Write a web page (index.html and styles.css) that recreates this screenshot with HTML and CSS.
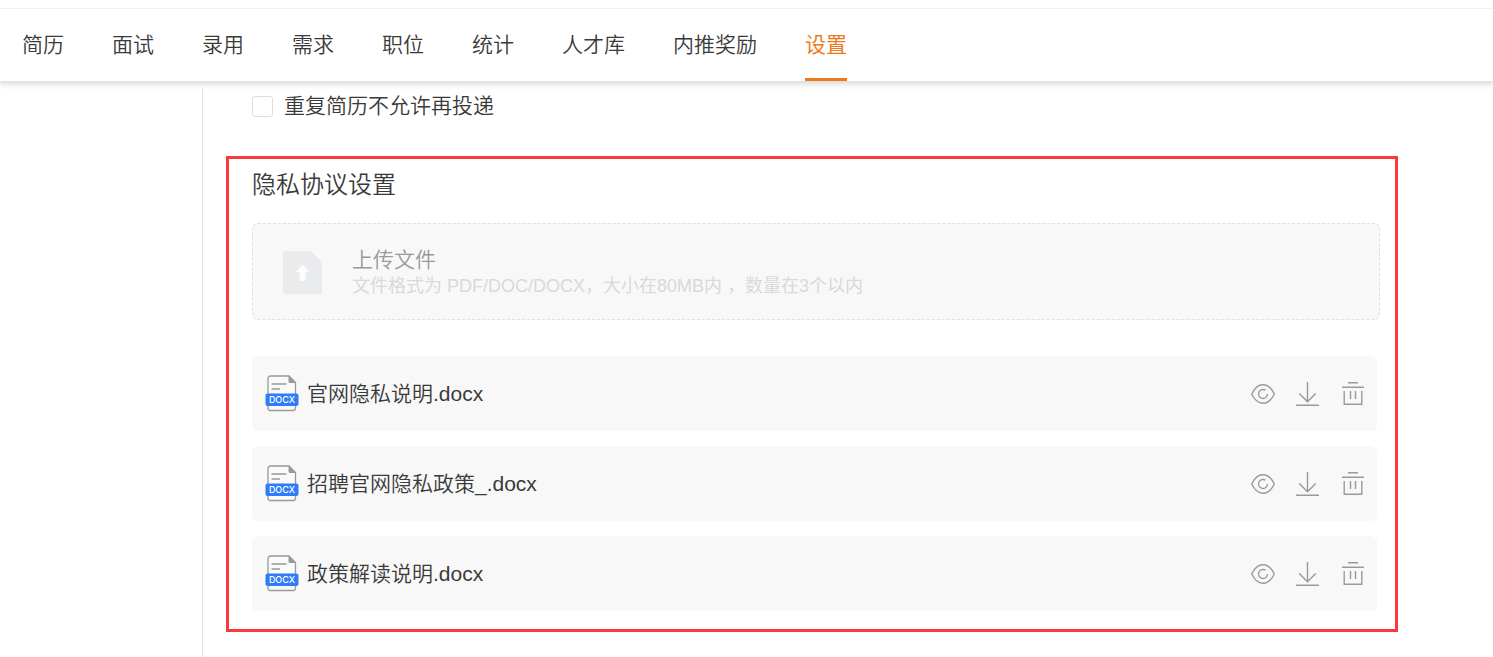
FILE: index.html
```html
<!DOCTYPE html>
<html lang="zh-CN">
<head>
<meta charset="utf-8">
<meta name="viewport" content="width=device-width, initial-scale=1">
<title>设置</title>
<link rel="stylesheet" href="styles.css">
</head>
<body>
<svg class="sprite" aria-hidden="true">
  <symbol id="docx" viewBox="0 0 34 37">
    <path d="M5.500 1h18.500l6.500 6.500v25.500a2.500 2.500 0 0 1-2.500 2.500h-22.500a2.500 2.500 0 0 1-2.500-2.500v-29.500a2.500 2.500 0 0 1 2.500-2.500z" fill="#fafafa" stroke="#999" stroke-width="1.300"/>
    <path d="M23.500 1h.5l6.500 6.500v.5h-5.500a1.500 1.500 0 0 1-1.500-1.500z" fill="#999"/>
    <path d="M7 9h14M7 14h7.500" stroke="#999" stroke-width="1.300" stroke-linecap="round"/>
    <rect x="0.500" y="18.500" width="33" height="12.500" rx="2" fill="#2f7cf6"/>
  </symbol>
  <symbol id="eye" viewBox="0 0 24 24">
    <path d="M.7 12C3.500 6 7.500 2.800 12 2.800S20.500 6 23.300 12C20.500 18 16.500 21.200 12 21.200S3.500 18 .7 12z"/>
    <path d="M14.500 8.200A4.500 4.500 0 1 0 16.500 12"/>
  </symbol>
  <symbol id="download" viewBox="0 0 24 24">
    <path d="M11.500 0v19.500M3.300 11.500l8.200 8.200 8.200-8.200M0 23.300h23"/>
  </symbol>
  <symbol id="trash" viewBox="0 0 24 24">
    <path d="M7 .8h10M1 5.200h22M3.200 9v13.200h17.600V9M9.500 9v8M14.500 9v8"/>
  </symbol>
</svg>

<header class="topbar">
  <nav class="nav" aria-label="主导航">
    <a href="#">简历</a>
    <a href="#">面试</a>
    <a href="#">录用</a>
    <a href="#">需求</a>
    <a href="#">职位</a>
    <a href="#">统计</a>
    <a href="#">人才库</a>
    <a href="#">内推奖励</a>
    <a href="#" class="active" aria-current="page">设置</a>
  </nav>
</header>

<div class="layout">
  <aside class="sidebar"></aside>
  <main class="content">
    <label class="option"><input type="checkbox"><span>重复简历不允许再投递</span></label>

    <section class="privacy">
      <h2 class="title">隐私协议设置</h2>
      <button class="upload" type="button" disabled>
        <svg class="upload-icon" viewBox="0 0 39 43" aria-hidden="true">
          <path d="M2 0h26l11 11v30a2 2 0 0 1-2 2h-35a2 2 0 0 1-2-2v-39a2 2 0 0 1 2-2z" fill="#eaebed"/>
          <path d="M19.500 14l6 6.500h-3.500v9h-5v-9h-3.500z" fill="#fcfcfc" stroke="#fcfcfc" stroke-linejoin="round"/>
        </svg>
        <span class="upload-text">
          <span class="upload-name">上传文件</span>
          <span class="upload-hint">文件格式为 PDF/DOC/DOCX，大小在80MB内 ，数量在3个以内</span>
        </span>
      </button>

      <ul class="files">
        <li class="file">
          <svg class="file-icon" viewBox="0 0 34 37" aria-hidden="true"><use href="#docx"/><text x="17" y="28" text-anchor="middle" class="docx-tag">DOCX</text></svg>
          <span class="file-name">官网隐私说明.docx</span>
          <span class="actions">
            <button type="button" aria-label="预览"><svg><use href="#eye"/></svg></button>
            <button type="button" aria-label="下载"><svg><use href="#download"/></svg></button>
            <button type="button" aria-label="删除"><svg><use href="#trash"/></svg></button>
          </span>
        </li>
        <li class="file">
          <svg class="file-icon" viewBox="0 0 34 37" aria-hidden="true"><use href="#docx"/><text x="17" y="28" text-anchor="middle" class="docx-tag">DOCX</text></svg>
          <span class="file-name">招聘官网隐私政策_.docx</span>
          <span class="actions">
            <button type="button" aria-label="预览"><svg><use href="#eye"/></svg></button>
            <button type="button" aria-label="下载"><svg><use href="#download"/></svg></button>
            <button type="button" aria-label="删除"><svg><use href="#trash"/></svg></button>
          </span>
        </li>
        <li class="file">
          <svg class="file-icon" viewBox="0 0 34 37" aria-hidden="true"><use href="#docx"/><text x="17" y="28" text-anchor="middle" class="docx-tag">DOCX</text></svg>
          <span class="file-name">政策解读说明.docx</span>
          <span class="actions">
            <button type="button" aria-label="预览"><svg><use href="#eye"/></svg></button>
            <button type="button" aria-label="下载"><svg><use href="#download"/></svg></button>
            <button type="button" aria-label="删除"><svg><use href="#trash"/></svg></button>
          </span>
        </li>
      </ul>
    </section>
  </main>
</div>
</body>
</html>
```
FILE: styles.css
```css
* {
  box-sizing: border-box;
}

body {
  margin: 0;
  min-height: 100vh;
  display: flex;
  flex-direction: column;
  background: #fff;
  color: #3a3a3a;
  font-family: "Liberation Sans", "Noto Sans CJK SC", sans-serif;
  font-size: 21px;
  font-weight: 350;
}

button {
  font: inherit;
}

.sprite {
  position: absolute;
  width: 0;
  height: 0;
}

.docx-tag {
  fill: #fff;
  font-family: Inter, sans-serif;
  font-size: 9px;
  font-weight: 500;
}

.topbar {
  padding-top: 8px;
  box-shadow: 0 2px 6px 1px rgba(0, 0, 0, 0.16);
}

.nav {
  display: flex;
  gap: 48px;
  padding: 0 22px;
  border-top: 1px solid #f0f0f0;
}

.nav a {
  border-bottom: 3px solid transparent;
  padding-top: 3px;
  color: inherit;
  line-height: 66px;
  text-decoration: none;
  white-space: nowrap;
}

.nav .active {
  border-color: #eb7a1d;
  color: #eb7a1d;
  font-weight: 400;
}

.layout {
  display: flex;
  flex: 1;
  padding-top: 8px;
}

.sidebar {
  flex: 0 0 203px;
  border-right: 1px solid #e2e2e2;
}

.content {
  flex: 1;
  min-width: 0;
  padding: 0 95px 25px 23px;
}

.option {
  display: flex;
  align-items: center;
  gap: 11px;
  margin-bottom: 33px;
  padding-left: 26px;
  line-height: 34px;
}

.option input {
  appearance: none;
  width: 21px;
  height: 21px;
  margin: 0;
  border: 1px solid #dedede;
  border-radius: 3px;
  background: #fff;
}

.option input:checked {
  background: #eb7a1d;
}

.privacy {
  padding: 10px 15px 18px 23px;
  border: 3px solid #fa3a3a;
}

.title {
  margin: 0 0 22px;
  font-size: 24px;
  font-weight: 350;
  line-height: 32px;
}

.upload {
  display: flex;
  align-items: center;
  gap: 30px;
  width: 100%;
  margin-bottom: 36px;
  padding: 22px 30px 21px;
  border: 1px dashed #e1e1e1;
  border-radius: 6px;
  background: #f8f8f8;
  text-align: left;
}

.upload-icon {
  flex: none;
  width: 39px;
  height: 43px;
}

.upload-text {
  display: flex;
  flex-direction: column;
}

.upload-name {
  color: #999;
  line-height: 28px;
}

.upload-hint {
  color: #d9d9d9;
  font-size: 18px;
  font-weight: 400;
  line-height: 24px;
}

.files {
  display: flex;
  flex-direction: column;
  gap: 15px;
  margin: 0 3px 0 0;
  padding: 0;
  list-style: none;
}

.file {
  display: flex;
  align-items: center;
  padding: 19px 12px;
  border-radius: 6px;
  background: #f8f8f8;
}

.file-icon {
  flex: none;
  width: 34px;
  height: 37px;
  margin: 0 8px 0 1px;
}

.file-name {
  flex: 1;
  line-height: 36px;
}

.actions {
  display: flex;
  gap: 21px;
}

.actions button {
  display: flex;
  padding: 0;
  border: 0;
  background: none;
  cursor: pointer;
}

.actions svg {
  width: 24px;
  height: 24px;
  fill: none;
  stroke: #999;
  stroke-width: 1.4;
}
```
